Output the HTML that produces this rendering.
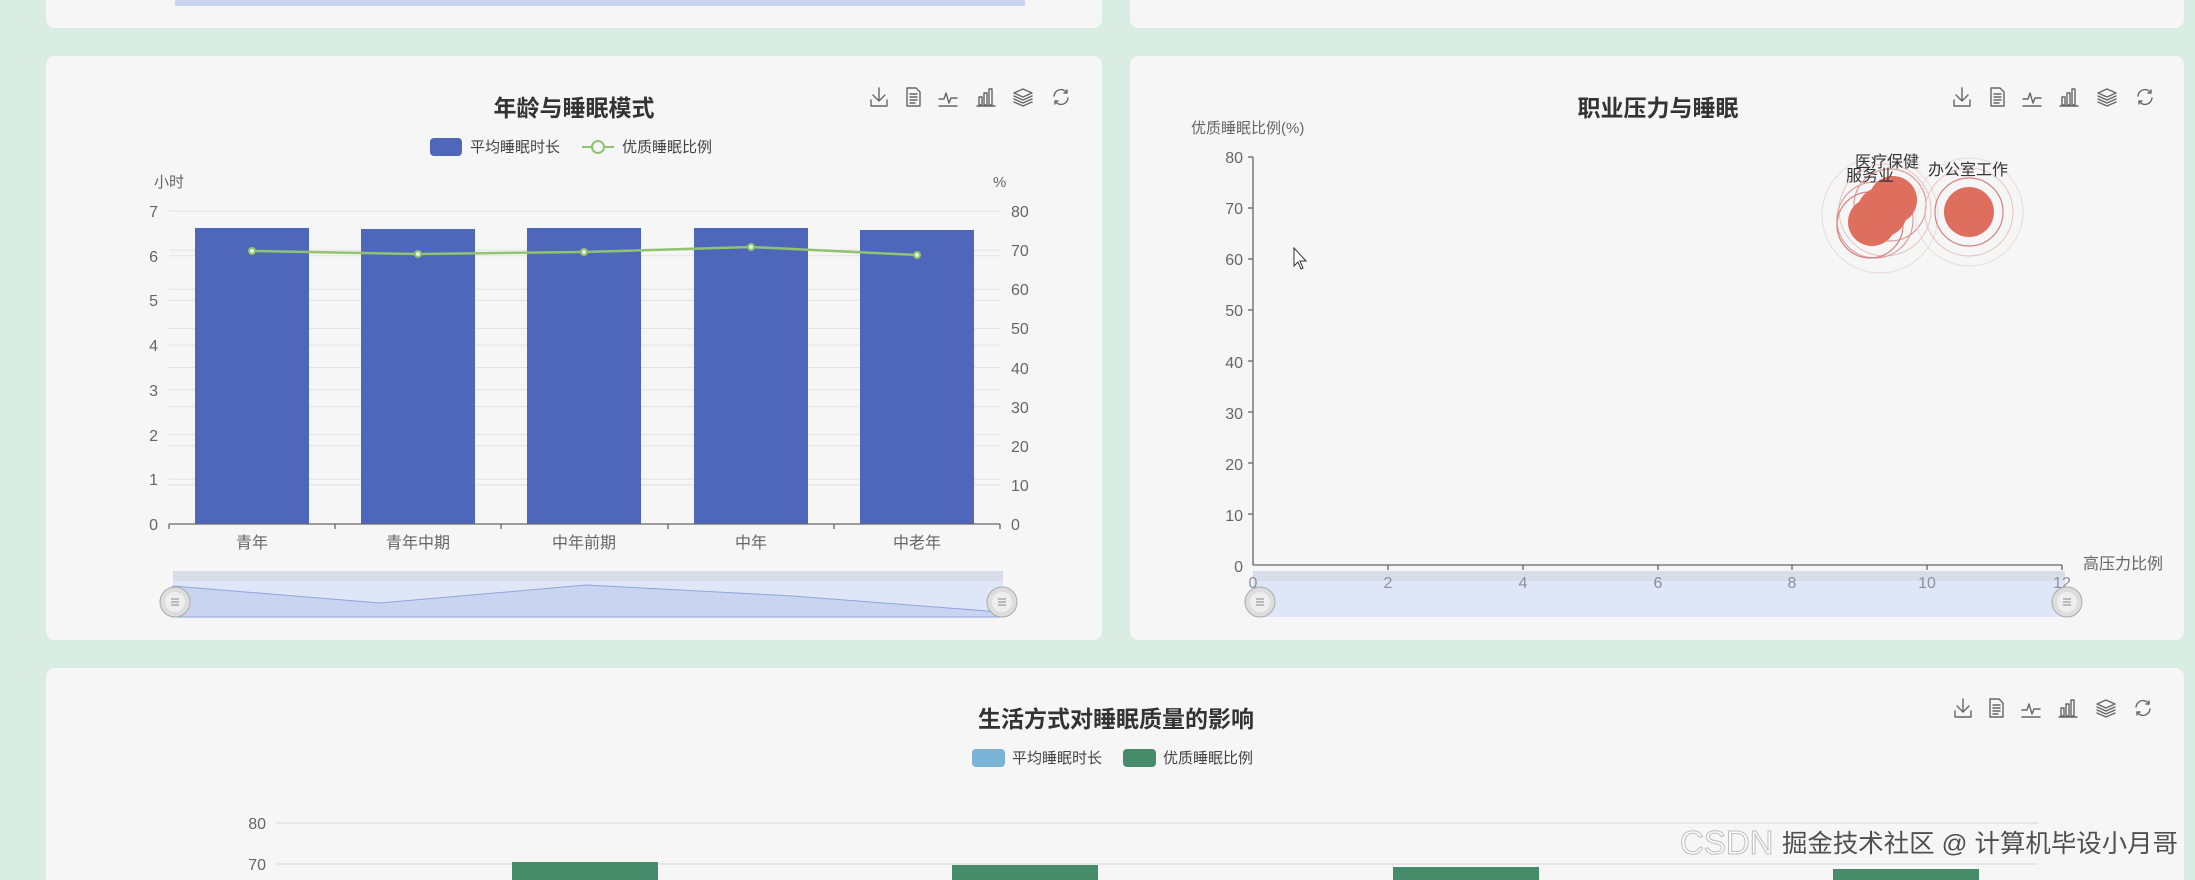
<!DOCTYPE html>
<html><head><meta charset="utf-8"><style>
html,body{margin:0;padding:0;width:2195px;height:880px;overflow:hidden;background:#d9ede4}
svg{display:block}
text{font-family:"Liberation Sans","Noto Sans CJK SC",sans-serif}
</style></head><body>
<svg width="2195" height="880" viewBox="0 0 2195 880" xmlns="http://www.w3.org/2000/svg">
<rect width="2195" height="880" fill="#d9ede4"/>
<rect x="46" y="-20" width="1056" height="48" rx="9" fill="#f6f6f6"/>
<rect x="1130" y="-20" width="1054" height="48" rx="9" fill="#f6f6f6"/>
<rect x="175" y="0" width="850" height="6" fill="#c9d5f0"/>
<rect x="46" y="56" width="1056" height="584" rx="9" fill="#f6f6f6"/>
<rect x="1130" y="56" width="1054" height="584" rx="9" fill="#f6f6f6"/>
<rect x="46" y="668" width="2138" height="240" rx="9" fill="#f6f6f6"/>

<text x="574" y="116" text-anchor="middle" font-size="23" font-weight="bold" fill="#333">年龄与睡眠模式</text>
<g fill="none" stroke="#666" stroke-width="1.4" stroke-linecap="round" stroke-linejoin="round">
 <g transform="translate(869,87)"><path d="M10 1V14M4 8L10 14L16 8M2 13V19H18V13"/></g>
 <g transform="translate(903,87)"><path d="M4 1H13L17 5V19H4ZM7 7H14M7 10H14M7 13H14M7 16H12"/></g>
 <g transform="translate(938,87)"><path d="M1 12H6L8 6L11 16L13 11H19M1 19H19"/></g>
 <g transform="translate(976,87)"><path d="M3 10h3v8h-3zM8 6h3v12h-3zM13 2h3v16h-3zM1 19H19"/></g>
 <g transform="translate(1013,87)"><path d="M10 2L19 6L10 10L1 6ZM1 9L10 13L19 9M1 12L10 16L19 12M1 15L10 19L19 15"/></g>
 <g transform="translate(1051,87)"><path d="M16 6A7 7 0 0 0 3 9M4 14A7 7 0 0 0 17 11M13 6H16V3M7 14H4V17"/></g>
</g>
<rect x="430" y="138" width="32" height="18" rx="4" fill="#4e67bb"/>
<text x="470" y="152" font-size="15" fill="#444">平均睡眠时长</text>
<line x1="582" y1="147" x2="614" y2="147" stroke="#91c26f" stroke-width="2"/>
<circle cx="598" cy="147" r="6" fill="#f6f6f6" stroke="#91c26f" stroke-width="2"/>
<text x="622" y="152" font-size="15" fill="#444">优质睡眠比例</text>
<text x="154" y="187" font-size="15" fill="#666">小时</text>
<text x="993" y="187" font-size="15" fill="#666">%</text>
<g stroke="#e2e2e2" stroke-width="1">
 <line x1="169" x2="1000" y1="211" y2="211"/><line x1="169" x2="1000" y1="255.7" y2="255.7"/><line x1="169" x2="1000" y1="300.4" y2="300.4"/><line x1="169" x2="1000" y1="345.1" y2="345.1"/><line x1="169" x2="1000" y1="389.8" y2="389.8"/><line x1="169" x2="1000" y1="434.6" y2="434.6"/><line x1="169" x2="1000" y1="479.3" y2="479.3"/>
 <line x1="169" x2="1000" y1="250.1" y2="250.1"/><line x1="169" x2="1000" y1="289.3" y2="289.3"/><line x1="169" x2="1000" y1="328.4" y2="328.4"/><line x1="169" x2="1000" y1="367.5" y2="367.5"/><line x1="169" x2="1000" y1="406.6" y2="406.6"/><line x1="169" x2="1000" y1="445.8" y2="445.8"/><line x1="169" x2="1000" y1="484.9" y2="484.9"/>
</g>
<g font-size="16" fill="#666" text-anchor="end">
 <text x="158" y="217">7</text><text x="158" y="262">6</text><text x="158" y="306">5</text><text x="158" y="351">4</text><text x="158" y="396">3</text><text x="158" y="441">2</text><text x="158" y="485">1</text><text x="158" y="530">0</text>
</g>
<g font-size="16" fill="#666">
 <text x="1011" y="217">80</text><text x="1011" y="256">70</text><text x="1011" y="295">60</text><text x="1011" y="334">50</text><text x="1011" y="374">40</text><text x="1011" y="413">30</text><text x="1011" y="452">20</text><text x="1011" y="491">10</text><text x="1011" y="530">0</text>
</g>
<g fill="#4e67bb">
 <rect x="195" y="228" width="114" height="296"/>
 <rect x="361" y="229" width="114" height="295"/>
 <rect x="527" y="228" width="114" height="296"/>
 <rect x="694" y="228" width="114" height="296"/>
 <rect x="860" y="230" width="114" height="294"/>
</g>
<line x1="169" y1="524" x2="1000" y2="524" stroke="#666" stroke-width="1.3"/>
<g stroke="#666" stroke-width="1.3"><line x1="169" y1="524" x2="169" y2="529"/><line x1="335" y1="524" x2="335" y2="529"/><line x1="501" y1="524" x2="501" y2="529"/><line x1="668" y1="524" x2="668" y2="529"/><line x1="834" y1="524" x2="834" y2="529"/><line x1="1000" y1="524" x2="1000" y2="529"/></g>
<polyline points="252,251 418,254 584,252 751,247 917,255" fill="none" stroke="#91c26f" stroke-width="2.5"/>
<g fill="#e8f3df" stroke="#91c26f" stroke-width="2"><circle cx="252" cy="251" r="3"/><circle cx="418" cy="254" r="3"/><circle cx="584" cy="252" r="3"/><circle cx="751" cy="247" r="3"/><circle cx="917" cy="255" r="3"/></g>
<g font-size="16" fill="#666" text-anchor="middle">
 <text x="252" y="548">青年</text><text x="418" y="548">青年中期</text><text x="584" y="548">中年前期</text><text x="751" y="548">中年</text><text x="917" y="548">中老年</text>
</g>
<rect x="173" y="571" width="830" height="10" fill="#d8dde9"/>
<rect x="173" y="581" width="830" height="36" fill="#dfe6f7"/>
<path d="M173 586L380 603L586 585L793 596L1000 612V617H173Z" fill="#c8d4f0" stroke="#8fa6dc" stroke-width="1"/>
<g><circle cx="175" cy="602" r="15" fill="#ddd" stroke="#aaa"/><circle cx="175" cy="602" r="10" fill="#eee"/><path d="M171 599h8M171 602h8M171 605h8" stroke="#888"/></g>
<g><circle cx="1002" cy="602" r="15" fill="#ddd" stroke="#aaa"/><circle cx="1002" cy="602" r="10" fill="#eee"/><path d="M998 599h8M998 602h8M998 605h8" stroke="#888"/></g>

<text x="1658" y="116" text-anchor="middle" font-size="23" font-weight="bold" fill="#333">职业压力与睡眠</text>
<g fill="none" stroke="#666" stroke-width="1.4" stroke-linecap="round" stroke-linejoin="round">
 <g transform="translate(1952,87)"><path d="M10 1V14M4 8L10 14L16 8M2 13V19H18V13"/></g>
 <g transform="translate(1987,87)"><path d="M4 1H13L17 5V19H4ZM7 7H14M7 10H14M7 13H14M7 16H12"/></g>
 <g transform="translate(2022,87)"><path d="M1 12H6L8 6L11 16L13 11H19M1 19H19"/></g>
 <g transform="translate(2059,87)"><path d="M3 10h3v8h-3zM8 6h3v12h-3zM13 2h3v16h-3zM1 19H19"/></g>
 <g transform="translate(2097,87)"><path d="M10 2L19 6L10 10L1 6ZM1 9L10 13L19 9M1 12L10 16L19 12M1 15L10 19L19 15"/></g>
 <g transform="translate(2135,87)"><path d="M16 6A7 7 0 0 0 3 9M4 14A7 7 0 0 0 17 11M13 6H16V3M7 14H4V17"/></g>
</g>
<text x="1191" y="133" font-size="15" fill="#666">优质睡眠比例(%)</text>
<line x1="1253" y1="157" x2="1253" y2="565" stroke="#666" stroke-width="1.3"/>
<line x1="1253" y1="565" x2="2062" y2="565" stroke="#666" stroke-width="1.3"/>
<g font-size="16" fill="#666" text-anchor="end">
 <text x="1243" y="163">80</text><text x="1243" y="214">70</text><text x="1243" y="265">60</text><text x="1243" y="316">50</text><text x="1243" y="368">40</text><text x="1243" y="419">30</text><text x="1243" y="470">20</text><text x="1243" y="521">10</text><text x="1243" y="572">0</text>
</g>
<g stroke="#666" stroke-width="1.3">
 <line x1="1248" x2="1253" y1="157" y2="157"/><line x1="1248" x2="1253" y1="208" y2="208"/><line x1="1248" x2="1253" y1="259" y2="259"/><line x1="1248" x2="1253" y1="310" y2="310"/><line x1="1248" x2="1253" y1="361" y2="361"/><line x1="1248" x2="1253" y1="412" y2="412"/><line x1="1248" x2="1253" y1="463" y2="463"/><line x1="1248" x2="1253" y1="514" y2="514"/>
 <line x1="1388" x2="1388" y1="565" y2="570"/><line x1="1523" x2="1523" y1="565" y2="570"/><line x1="1658" x2="1658" y1="565" y2="570"/><line x1="1792" x2="1792" y1="565" y2="570"/><line x1="1927" x2="1927" y1="565" y2="570"/><line x1="2062" x2="2062" y1="565" y2="570"/>
</g>
<text x="2083" y="569" font-size="16" fill="#666">高压力比例</text>
<rect x="1253" y="571" width="812" height="10" fill="#d8dde9"/>
<rect x="1253" y="581" width="812" height="36" fill="#dfe6f7"/>
<g font-size="16" fill="#8a8fa0" text-anchor="middle">
 <text x="1253" y="588">0</text><text x="1388" y="588">2</text><text x="1523" y="588">4</text><text x="1658" y="588">6</text><text x="1792" y="588">8</text><text x="1927" y="588">10</text><text x="2062" y="588">12</text>
</g>
<g><circle cx="1260" cy="602" r="15" fill="#ddd" stroke="#aaa"/><circle cx="1260" cy="602" r="10" fill="#eee"/><path d="M1256 599h8M1256 602h8M1256 605h8" stroke="#888"/></g>
<g><circle cx="2067" cy="602" r="15" fill="#ddd" stroke="#aaa"/><circle cx="2067" cy="602" r="10" fill="#eee"/><path d="M2063 599h8M2063 602h8M2063 605h8" stroke="#888"/></g>
<g fill="none">
 <circle cx="1880" cy="215" r="58" stroke="#eadada" stroke-width="1"/>
 <circle cx="1885" cy="210" r="46" stroke="#e6c3c3" stroke-width="1"/>
 <circle cx="1875" cy="220" r="38" stroke="#dc9a9a" stroke-width="1.2"/>
 <circle cx="1890" cy="205" r="36" stroke="#dc9a9a" stroke-width="1.2"/>
 <circle cx="1870" cy="225" r="33" stroke="#d88080" stroke-width="1.2"/>
 <circle cx="1969" cy="212" r="54" stroke="#eadada" stroke-width="1"/>
 <circle cx="1969" cy="212" r="44" stroke="#e6c3c3" stroke-width="1"/>
 <circle cx="1969" cy="212" r="34" stroke="#d88080" stroke-width="1.2"/>
</g>
<g fill="#de6e5e">
 <circle cx="1872" cy="222" r="24"/><circle cx="1882" cy="212" r="25"/><circle cx="1893" cy="200" r="24"/>
 <circle cx="1969" cy="212" r="25"/>
</g>
<g font-size="16" fill="#333">
 <text x="1855" y="167">医疗保健</text>
 <text x="1846" y="181">服务业</text>
 <text x="1928" y="175">办公室工作</text>
</g>
<path d="M1294 248l0 18l4-4l3 7l2-1l-3-7l6 0z" fill="#fff" stroke="#333" stroke-width="1"/>

<text x="1116" y="727" text-anchor="middle" font-size="23" font-weight="bold" fill="#333">生活方式对睡眠质量的影响</text>
<g fill="none" stroke="#666" stroke-width="1.4" stroke-linecap="round" stroke-linejoin="round">
 <g transform="translate(1953,698)"><path d="M10 1V14M4 8L10 14L16 8M2 13V19H18V13"/></g>
 <g transform="translate(1986,698)"><path d="M4 1H13L17 5V19H4ZM7 7H14M7 10H14M7 13H14M7 16H12"/></g>
 <g transform="translate(2021,698)"><path d="M1 12H6L8 6L11 16L13 11H19M1 19H19"/></g>
 <g transform="translate(2058,698)"><path d="M3 10h3v8h-3zM8 6h3v12h-3zM13 2h3v16h-3zM1 19H19"/></g>
 <g transform="translate(2096,698)"><path d="M10 2L19 6L10 10L1 6ZM1 9L10 13L19 9M1 12L10 16L19 12M1 15L10 19L19 15"/></g>
 <g transform="translate(2133,698)"><path d="M16 6A7 7 0 0 0 3 9M4 14A7 7 0 0 0 17 11M13 6H16V3M7 14H4V17"/></g>
</g>
<rect x="972" y="749" width="33" height="18" rx="4" fill="#7ab3d6"/>
<text x="1012" y="763" font-size="15" fill="#444">平均睡眠时长</text>
<rect x="1123" y="749" width="33" height="18" rx="4" fill="#468c6a"/>
<text x="1163" y="763" font-size="15" fill="#444">优质睡眠比例</text>
<line x1="276" y1="823" x2="2038" y2="823" stroke="#e0e0e0" stroke-width="1.5"/>
<line x1="276" y1="864" x2="2038" y2="864" stroke="#e0e0e0" stroke-width="1.5"/>
<text x="266" y="829" font-size="16" fill="#666" text-anchor="end">80</text>
<text x="266" y="870" font-size="16" fill="#666" text-anchor="end">70</text>
<g fill="#468c6a">
 <rect x="512" y="862" width="146" height="20"/>
 <rect x="952" y="865" width="146" height="20"/>
 <rect x="1393" y="867" width="146" height="20"/>
 <rect x="1833" y="869" width="146" height="20"/>
</g>
<text x="1680" y="854" font-size="33" fill="#fff" stroke="#b8b8b8" stroke-width="1" opacity="0.9">CSDN</text>
<text x="1782" y="852" font-size="25" fill="#333" opacity="0.85" textLength="396" lengthAdjust="spacingAndGlyphs">掘金技术社区 @ 计算机毕设小月哥</text>
</svg>
</body></html>
